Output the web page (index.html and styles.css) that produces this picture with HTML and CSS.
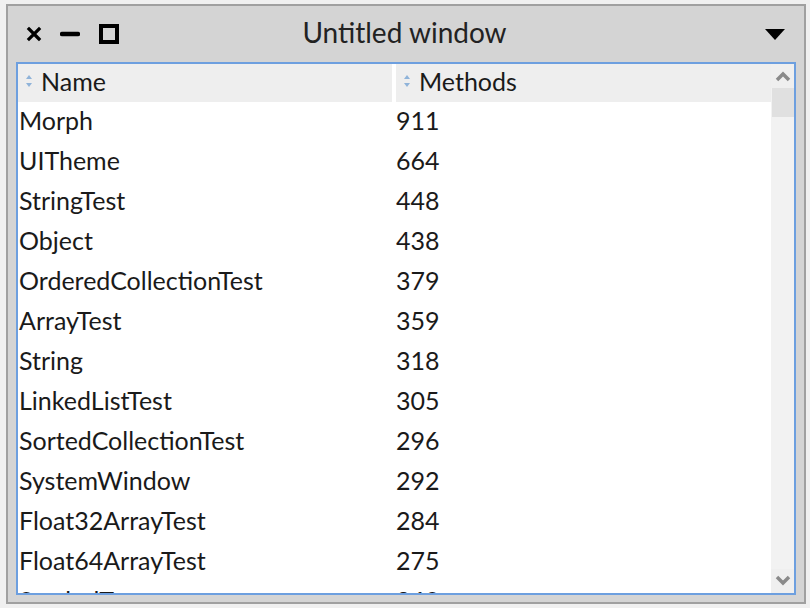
FILE: index.html
```html
<!DOCTYPE html>
<html>
<head>
<meta charset="utf-8">
<link rel="stylesheet" href="styles.css">
</head>
<body>
<div class="window">
  <div class="titlebar">
    <div class="controls">
      <svg class="ic-close" width="16" height="16" viewBox="0 0 16 16"><path d="M3 3 L13 13 M13 3 L3 13" stroke="#000" stroke-width="3.2" stroke-linecap="square"/></svg>
      <svg class="ic-min" width="20" height="16" viewBox="0 0 20 16"><path d="M2 8 H18" stroke="#000" stroke-width="4.5" stroke-linecap="round"/></svg>
      <svg class="ic-max" width="20" height="20" viewBox="0 0 20 20"><rect x="2" y="2" width="16" height="16" fill="none" stroke="#000" stroke-width="4"/></svg>
    </div>
    <div class="title">Untitled window</div>
    <svg class="ic-menu" width="22" height="14" viewBox="0 0 22 14"><path d="M1 1 H21 L11 12 Z" fill="#000"/></svg>
  </div>
  <div class="list">
    <div class="table">
      <div class="head">
        <div class="hcell"><span class="sort"><svg width="6" height="14" viewBox="0 0 6 14"><path d="M0 5 L3 1 L6 5 Z M0 9 L3 13 L6 9 Z" fill="#8fb3d9"/></svg></span>Name</div>
        <div class="hcell"><span class="sort"><svg width="6" height="14" viewBox="0 0 6 14"><path d="M0 5 L3 1 L6 5 Z M0 9 L3 13 L6 9 Z" fill="#8fb3d9"/></svg></span>Methods</div>
      </div>
      <div class="rows">
        <div class="row"><span class="c1">Morph</span><span class="c2">911</span></div>
        <div class="row"><span class="c1">UITheme</span><span class="c2">664</span></div>
        <div class="row"><span class="c1">StringTest</span><span class="c2">448</span></div>
        <div class="row"><span class="c1">Object</span><span class="c2">438</span></div>
        <div class="row"><span class="c1">OrderedCollectionTest</span><span class="c2">379</span></div>
        <div class="row"><span class="c1">ArrayTest</span><span class="c2">359</span></div>
        <div class="row"><span class="c1">String</span><span class="c2">318</span></div>
        <div class="row"><span class="c1">LinkedListTest</span><span class="c2">305</span></div>
        <div class="row"><span class="c1">SortedCollectionTest</span><span class="c2">296</span></div>
        <div class="row"><span class="c1">SystemWindow</span><span class="c2">292</span></div>
        <div class="row"><span class="c1">Float32ArrayTest</span><span class="c2">284</span></div>
        <div class="row"><span class="c1">Float64ArrayTest</span><span class="c2">275</span></div>
        <div class="row"><span class="c1">SymbolTest</span><span class="c2">260</span></div>
      </div>
    </div>
    <div class="scrollbar">
      <div class="sb-btn"><svg width="16" height="12" viewBox="0 0 16 12"><path d="M2 10 L8 4 L14 10" fill="none" stroke="#8a8a8a" stroke-width="3.5"/></svg></div>
      <div class="sb-track"><div class="sb-thumb"></div></div>
      <div class="sb-btn"><svg width="16" height="12" viewBox="0 0 16 12"><path d="M2 2 L8 8 L14 2" fill="none" stroke="#8a8a8a" stroke-width="3.5"/></svg></div>
    </div>
  </div>
</div>
</body>
</html>
```
FILE: styles.css
```css
* { box-sizing: border-box; }
html, body { margin: 0; padding: 0; }
body {
  background: #f0f0f0;
  font-family: "Lato", "Noto Sans", sans-serif;
  color: #1a1a1a;
  width: 810px;
  height: 608px;
  overflow: hidden;
}
.window {
  margin: 4px 0 0 6px;
  width: 800px;
  height: 600px;
  border: 2px solid #a0a0a0;
  background: #d4d4d4;
  display: flex;
  flex-direction: column;
}
.titlebar {
  height: 56px;
  display: grid;
  grid-template-columns: 1fr auto 1fr;
  align-items: center;
  padding: 0 18px 0 18px;
}
.controls {
  display: flex;
  align-items: center;
}
.ic-close { margin-left: 0; }
.ic-min { margin-left: 18px; }
.ic-max { margin-left: 19px; }
.title {
  text-align: center;
  font-size: 28px;
  padding-bottom: 5px;
  margin-right: 3px;
  color: #222;
}
.ic-menu { justify-self: end; margin-top: 1px; }
.list {
  flex: 1;
  margin: 0 8px 7px 8px;
  border: 2px solid #6d9fdf;
  background: #fff;
  display: flex;
  overflow: hidden;
}
.table {
  flex: 1;
  display: flex;
  flex-direction: column;
  overflow: hidden;
}
.head {
  height: 38px;
  display: grid;
  grid-template-columns: 374px 1fr;
  column-gap: 4px;
  flex: none;
}
.hcell {
  background: #eeeeee;
  display: flex;
  align-items: center;
  font-size: 25px;
  padding-left: 8px;
  padding-bottom: 5px;
}
.sort { display: inline-flex; margin-right: 9px; }
.rows { flex: 1; overflow: hidden; }
.row {
  height: 40px;
  display: grid;
  grid-template-columns: 378px 1fr;
  align-items: center;
  font-size: 25px;
  padding-bottom: 5px;
}
.c1 { padding-left: 1px; }
.scrollbar {
  width: 23px;
  background: #f2f2f2;
  display: flex;
  flex-direction: column;
  flex: none;
}
.sb-btn {
  height: 24px;
  display: flex;
  align-items: center;
  justify-content: center;
  background: #efefef;
}
.sb-track { flex: 1; padding: 0 0 0 1px; }
.sb-thumb { height: 29px; background: #e0e0e0; }
```
